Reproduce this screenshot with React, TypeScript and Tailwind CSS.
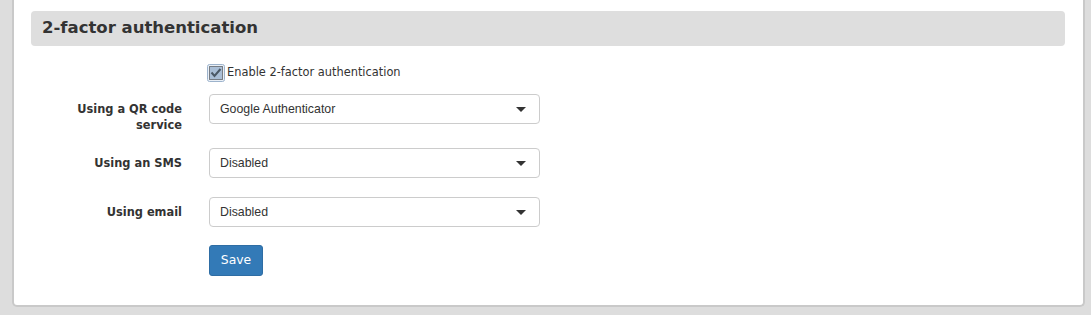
import React from "react";

const Caret = () => (
  <svg width="10" height="5" viewBox="0 0 10 5" className="shrink-0">
    <path d="M0 0 L10 0 L5 5 Z" fill="#333" />
  </svg>
);

function Select({ value }: { value: string }) {
  return (
    <div className="flex h-[30px] w-[331px] items-center justify-between rounded-[4px] border border-[#cccccc] bg-white pl-[10px] pr-[13px] text-[12.35px] text-[#333] [font-family:'Liberation_Sans',Arial,sans-serif]">
      <span>{value}</span>
      <Caret />
    </div>
  );
}

function Row({ label, value, mt }: { label: React.ReactNode; value: string; mt: string }) {
  return (
    <div className={`flex items-start ${mt}`}>
      <div className="w-[151px] pt-[7px] text-right text-[11.4px] font-bold leading-[16px] text-[#333]">{label}</div>
      <div className="ml-[27px]">
        <Select value={value} />
      </div>
    </div>
  );
}

export default function App() {
  return (
    <div className="h-[315px] w-full overflow-hidden bg-[#dddddd] pl-[12px] pr-[6px] [font-family:'DejaVu_Sans',sans-serif]">
      <div className="rounded-b-[5px] border-x-2 border-b-2 border-[#c9c9c9] bg-white pb-[29px] pl-[17px] pr-[18px] pt-[11px]">
        <div className="flex h-[35px] items-center rounded-[4px] bg-[#dedede] pl-[11px] text-[16.5px] font-bold text-[#333]">
          2-factor authentication
        </div>
        <div className="ml-[176px] mt-[18px] flex h-[18px] items-center">
          <svg width="18" height="18" viewBox="0 0 18 18" className="shrink-0">
            <rect x="0.5" y="0.5" width="17" height="17" rx="2" fill="#e9eff6" stroke="#9db3cc" />
            <rect x="2.5" y="2.5" width="13" height="13" fill="#a9bed6" stroke="#222" strokeDasharray="1 1" />
            <path d="M4.5 8.5 L7.5 12 L13.5 5" fill="none" stroke="#4a5866" strokeWidth="2" />
          </svg>
          <span className="ml-[2px] text-[11.4px] text-[#333]">Enable 2-factor authentication</span>
        </div>
        <Row mt="mt-[12px]" label={<>Using a QR code<br />service</>} value="Google Authenticator" />
        <Row mt="mt-[15px]" label="Using an SMS" value="Disabled" />
        <Row mt="mt-[19px]" label="Using email" value="Disabled" />
        <div className="ml-[178px] mt-[18px]">
          <button className="h-[31px] w-[54px] rounded-[3px] border border-[#2e6da4] bg-[#337ab7] text-[12.4px] text-white">
            Save
          </button>
        </div>
      </div>
    </div>
  );
}
